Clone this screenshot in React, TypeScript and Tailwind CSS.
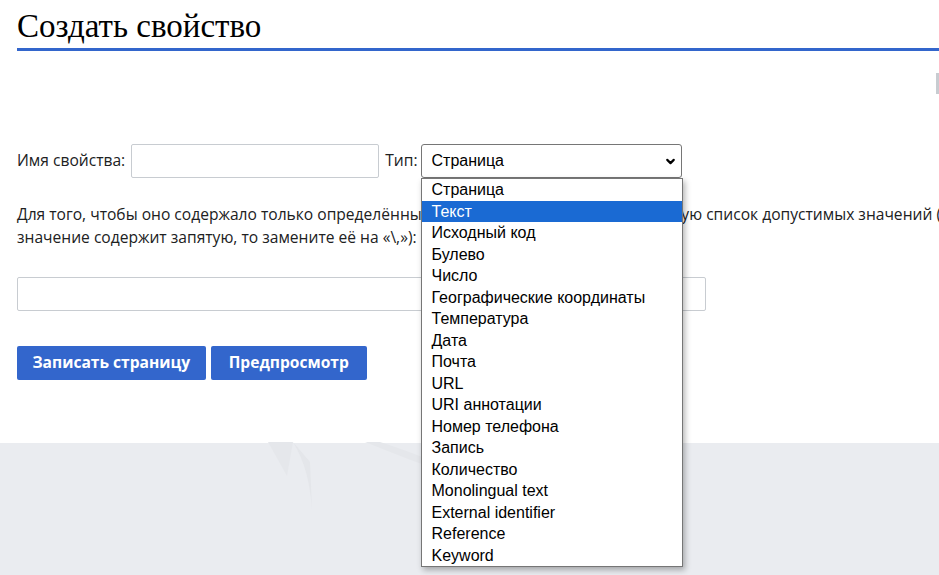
import { ChevronDown } from "lucide-react";

const types = [
  "Страница",
  "Текст",
  "Исходный код",
  "Булево",
  "Число",
  "Географические координаты",
  "Температура",
  "Дата",
  "Почта",
  "URL",
  "URI аннотации",
  "Номер телефона",
  "Запись",
  "Количество",
  "Monolingual text",
  "External identifier",
  "Reference",
  "Keyword",
];

function TypeSelect() {
  return (
    <div className="relative">
      <div className="flex h-[34px] w-[261px] items-center justify-between rounded-[3px] border border-[#767676] bg-white pl-[10px] pr-[4px] font-['Liberation_Sans',Arial,sans-serif] text-[16px] text-black">
        <span>Страница</span>
        <ChevronDown className="size-[13px]" strokeWidth={4} />
      </div>
      <ul className="absolute left-0 top-full z-10 w-[262px] border border-[#767676] bg-white font-['Liberation_Sans',Arial,sans-serif] text-[16px] text-black shadow-[2px_3px_6px_rgba(0,0,0,0.3)]">
        {types.map((t, i) => (
          <li
            key={t}
            className={
              "h-[21.5px] px-[10px] leading-[21.5px] " +
              (i === 1 ? "bg-[#1a6ad3] text-white" : "")
            }
          >
            {t}
          </li>
        ))}
      </ul>
    </div>
  );
}

export default function App() {
  return (
    <div className="relative min-h-[575px] overflow-hidden bg-[#eaecf0]">
      <main className="relative bg-white pb-[63px] pl-[17px] font-['Open_Sans',sans-serif] text-[15.6px] text-[#202122]">
        <h1 className="border-b-[3px] border-[#3366cc] pt-[7px] pb-[3px] font-['Liberation_Serif',serif] text-[33px] leading-[38px] text-black">
          Создать свойство
        </h1>
        <div className="absolute right-0 top-[73px] h-[21px] w-[3px] bg-[#c8ccd1]" />

        <div className="mt-[92px] flex items-center">
          <label>Имя свойства:</label>
          <input className="ml-[6px] h-[34px] w-[248px] rounded-[2px] border border-[#c8ccd1] bg-white" />
          <span className="ml-[6px] mr-[3px]">Тип:</span>
          <div className="pt-[1px]">
            <TypeSelect />
          </div>
        </div>

        <p className="mt-[25px] whitespace-nowrap leading-[23px]">
          Для того, чтобы оно содержало только определённые значения, укажите через{" "}
          <span className="inline-block w-[10px]" />
          запятую список допустимых значений (если
          <br />
          значение содержит запятую, то замените её на «\,»):
        </p>

        <input className="mt-[28px] block h-[34px] w-[689px] rounded-[2px] border border-[#c8ccd1] bg-white" />

        <div className="mt-[35px] flex gap-[5px]">
          <button className="h-[34px] rounded-[2px] bg-[#3366cc] px-[15.5px] font-bold text-white">
            Записать страницу
          </button>
          <button className="h-[34px] rounded-[2px] bg-[#3366cc] px-[18px] font-bold text-white">
            Предпросмотр
          </button>
        </div>
      </main>
      <svg className="pointer-events-none absolute left-[260px] top-[442px]" width="200" height="80" viewBox="0 0 200 80">
        <path d="M8 0 L27 34 L33 0 Z" fill="#e5e7eb" />
        <path d="M33 0 C45 20 50 40 52 68 L50 20 Z" fill="#e4e6ea" />
        <path d="M105 0 C130 10 160 22 185 30 L190 26 C165 16 140 6 120 0 Z" fill="#e5e7eb" />
      </svg>
    </div>
  );
}
